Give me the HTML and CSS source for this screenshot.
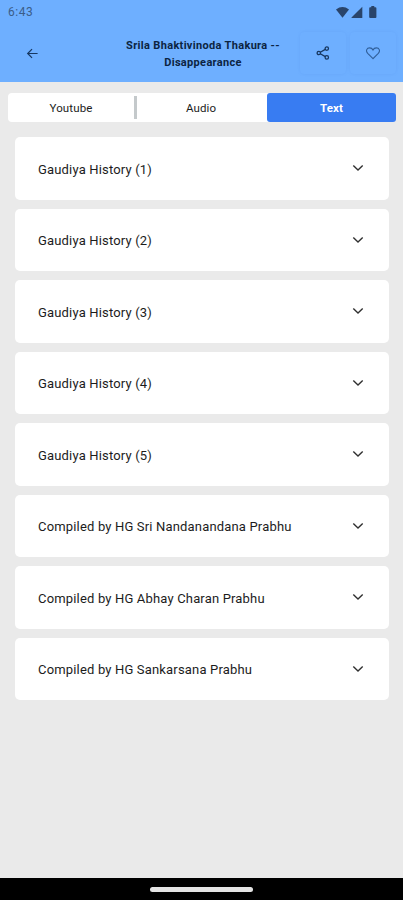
FILE: index.html
```
<!DOCTYPE html>
<html lang="en">
<head>
<meta charset="utf-8">
<title>Srila Bhaktivinoda Thakura -- Disappearance</title>
<link rel="stylesheet" href="styles.css">
</head>
<body>
<header class="header">
  <div class="status">
    <span class="time">6:43</span>
    <svg class="status-icons" width="42" height="14" viewBox="0 0 42 14">
      <path d="M0 3.4Q6.5-1.5 13 3.4L6.5 11.7Z"/>
      <path d="M15.500 12V11.500L26.300.7V12Z"/>
      <path d="M35.300 0h3v1.300h1.200q.9 0 .9.900v8.900q0 .9-.9.900h-5.400q-.9 0-.9-.9V2.200q0-.9.900-.9h1.200Z"/>
    </svg>
  </div>
  <div class="toolbar">
    <button class="tool" aria-label="Back"><svg width="13" height="13" viewBox="0 0 14 14"><path d="M12.500 7H2M6.500 2.300 1.800 7l4.700 4.700"/></svg></button>
    <h1 class="title">Srila Bhaktivinoda Thakura --<br>Disappearance</h1>
    <button class="tool raised share" aria-label="Share"><svg width="14" height="14" viewBox="0 0 14 14"><circle cx="2.800" cy="7" r="1.700"/><circle cx="10.800" cy="2.600" r="1.700"/><circle cx="10.800" cy="11.400" r="1.700"/><path d="m4.300 6.200 5-2.800M4.300 7.800l5 2.800"/></svg></button>
    <button class="tool raised heart" aria-label="Favourite"><svg width="14" height="14" viewBox="0 0 14 14"><path d="M7 12.600 1.700 7.300C-.6 4.800.8 1.900 3.600 1.900 5.200 1.900 6.400 2.700 7 4 7.600 2.700 8.800 1.900 10.400 1.900c2.800 0 4.200 2.900 1.900 5.400Z"/></svg></button>
  </div>
</header>
<nav class="tabs">
  <button class="tab">Youtube</button>
  <span class="divider"></span>
  <button class="tab">Audio</button>
  <button class="tab active">Text</button>
</nav>
<main class="list">
  <div class="card"><span>Gaudiya History (1)</span><svg class="chevron" viewBox="0 0 12 8"><path d="m1.300 1.500 4.700 4.500 4.700-4.500"/></svg></div>
  <div class="card"><span>Gaudiya History (2)</span><svg class="chevron" viewBox="0 0 12 8"><path d="m1.300 1.500 4.700 4.500 4.700-4.500"/></svg></div>
  <div class="card"><span>Gaudiya History (3)</span><svg class="chevron" viewBox="0 0 12 8"><path d="m1.300 1.500 4.700 4.500 4.700-4.500"/></svg></div>
  <div class="card"><span>Gaudiya History (4)</span><svg class="chevron" viewBox="0 0 12 8"><path d="m1.300 1.500 4.700 4.500 4.700-4.500"/></svg></div>
  <div class="card"><span>Gaudiya History (5)</span><svg class="chevron" viewBox="0 0 12 8"><path d="m1.300 1.500 4.700 4.500 4.700-4.500"/></svg></div>
  <div class="card"><span>Compiled by HG Sri Nandanandana Prabhu</span><svg class="chevron" viewBox="0 0 12 8"><path d="m1.300 1.500 4.700 4.500 4.700-4.500"/></svg></div>
  <div class="card"><span>Compiled by HG Abhay Charan Prabhu</span><svg class="chevron" viewBox="0 0 12 8"><path d="m1.300 1.500 4.700 4.500 4.700-4.500"/></svg></div>
  <div class="card"><span>Compiled by HG Sankarsana Prabhu</span><svg class="chevron" viewBox="0 0 12 8"><path d="m1.300 1.500 4.700 4.500 4.700-4.500"/></svg></div>
</main>
<footer class="navbar"><span class="handle"></span></footer>
</body>
</html>
```
FILE: styles.css
```
* { box-sizing: border-box; }
body {
  margin: 0;
  height: 900px;
  display: flex;
  flex-direction: column;
  overflow: hidden;
  background: #eaeaea;
  color: #1c1c1c;
  font-family: Roboto, sans-serif;
}
button {
  padding: 0;
  border: 0;
  background: none;
  color: inherit;
  font: inherit;
}
svg { display: block; flex: none; }
.header {
  height: 82px;
  flex: none;
  background: #6eafff;
}
.status {
  height: 30px;
  padding: 6px 25px 0 8px;
  display: flex;
  justify-content: space-between;
}
.time {
  font-size: 12px;
  line-height: 13px;
  letter-spacing: .5px;
  color: #3b5d88;
}
.status-icons { fill: #29446a; }
.toolbar {
  height: 46px;
  padding: 0 7px 0 9px;
  display: flex;
  align-items: center;
}
.tool {
  width: 46px;
  height: 42px;
  flex: none;
  display: flex;
  align-items: center;
  justify-content: center;
  border-radius: 4px;
}
.tool svg {
  fill: none;
  stroke: #173760;
  stroke-width: 1.3;
}
.raised { box-shadow: 0 0 3px rgba(50, 110, 190, .1); }
.share { margin-right: 4px; }
.heart svg { stroke: #305f9a; stroke-width: 1.1; }
.title {
  flex: 1;
  margin: 0;
  padding: 2px 0 0 51px;
  text-align: center;
  white-space: nowrap;
  font-size: 11px;
  line-height: 17px;
  font-weight: 700;
  letter-spacing: .33px;
  color: #0c2442;
}
.tabs {
  width: 388px;
  height: 29px;
  flex: none;
  margin: 11px 0 0 8px;
  display: flex;
  align-items: center;
  border-radius: 4px;
  background: #fff;
}
.tab {
  flex: 1;
  height: 29px;
  padding-right: 3px;
  font-size: 11.500px;
  letter-spacing: .12px;
}
.divider {
  width: 3px;
  height: 23px;
  margin: 0 1px 0 -3px;
  background: #c4c9cb;
}
.active {
  flex: 0 0 129px;
  padding: 0;
  border-radius: 3px;
  background: #387cf2;
  color: #fff;
  font-weight: 700;
}
.list {
  flex: 1;
  padding: 15px 14px 0 15px;
}
.card {
  height: 62.500px;
  margin-bottom: 9px;
  padding: 0 25px 0 23px;
  display: flex;
  align-items: center;
  justify-content: space-between;
  border-radius: 5px;
  background: #fff;
  font-size: 13px;
  letter-spacing: .17px;
}
.card span { padding-top: 2px; }
.chevron {
  width: 12px;
  height: 8px;
  fill: none;
  stroke: #303030;
  stroke-width: 1.4;
}
.navbar {
  height: 22px;
  flex: none;
  display: flex;
  align-items: center;
  justify-content: center;
  background: #000;
}
.handle {
  width: 103px;
  height: 5px;
  border-radius: 3px;
  background: #e4e4e4;
}
```
